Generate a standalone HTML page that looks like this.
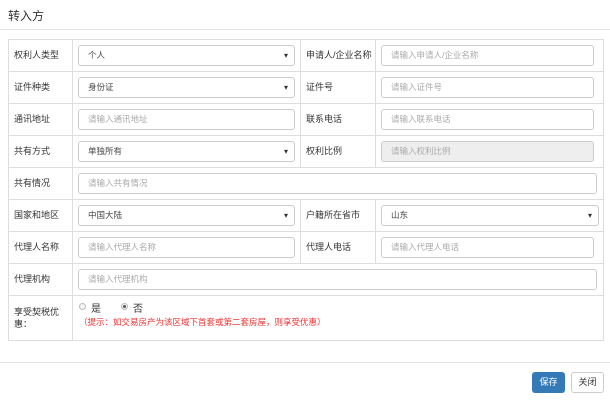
<!DOCTYPE html>
<html><head><meta charset="utf-8"><style>
*{box-sizing:border-box;margin:0;padding:0}
body{width:610px;height:402px;background:#fff;font-family:"Liberation Sans","Noto Sans CJK SC",sans-serif;font-size:9px;color:#333;position:relative;overflow:hidden}
.a{position:absolute}
.title{left:8px;top:7px;font-size:12px;color:#333}
.hl{left:0;width:610px;height:1px;background:#e5e5e5}
.lbl{font-size:9px;color:#333;line-height:32px}
.inp{border:1px solid #ccc;border-radius:3px;height:21px;line-height:19px;padding-left:9px;color:#aaa;font-size:8.5px;background:#fff}
.sel{color:#444}
.sel:after{content:"▾";position:absolute;right:6px;top:0;font-size:8px;color:#333}
.dis{background:#eee}
.v{width:1px;background:#ddd}
.h{height:1px;background:#ddd}
</style></head><body>
<div class="a title">转入方</div>
<div class="a hl" style="top:29px"></div>
<div class="a" style="left:8px;top:39px;width:596px;height:302px;border:1px solid #ddd"></div>
<div class="a h" style="left:8px;top:71px;width:596px"></div>
<div class="a h" style="left:8px;top:103px;width:596px"></div>
<div class="a h" style="left:8px;top:135px;width:596px"></div>
<div class="a h" style="left:8px;top:167px;width:596px"></div>
<div class="a h" style="left:8px;top:199px;width:596px"></div>
<div class="a h" style="left:8px;top:231px;width:596px"></div>
<div class="a h" style="left:8px;top:263px;width:596px"></div>
<div class="a h" style="left:8px;top:295px;width:596px"></div>
<div class="a v" style="left:72px;top:39px;height:302px"></div>
<div class="a v" style="left:300px;top:39px;height:128px"></div>
<div class="a v" style="left:375px;top:39px;height:128px"></div>
<div class="a v" style="left:300px;top:199px;height:64px"></div>
<div class="a v" style="left:375px;top:199px;height:64px"></div>

<div class="a lbl" style="left:14px;top:39px">权利人类型</div>
<div class="a inp sel" style="left:78px;top:45px;width:217px">个人</div>
<div class="a lbl" style="left:306px;top:39px">申请人/企业名称</div>
<div class="a inp" style="left:381px;top:45px;width:213px">请输入申请人/企业名称</div>

<div class="a lbl" style="left:14px;top:71px">证件种类</div>
<div class="a inp sel" style="left:78px;top:77px;width:217px">身份证</div>
<div class="a lbl" style="left:306px;top:71px">证件号</div>
<div class="a inp" style="left:381px;top:77px;width:213px">请输入证件号</div>

<div class="a lbl" style="left:14px;top:103px">通讯地址</div>
<div class="a inp" style="left:78px;top:109px;width:217px">请输入通讯地址</div>
<div class="a lbl" style="left:306px;top:103px">联系电话</div>
<div class="a inp" style="left:381px;top:109px;width:213px">请输入联系电话</div>

<div class="a lbl" style="left:14px;top:135px">共有方式</div>
<div class="a inp sel" style="left:78px;top:141px;width:217px">单独所有</div>
<div class="a lbl" style="left:306px;top:135px">权利比例</div>
<div class="a inp dis" style="left:381px;top:141px;width:213px">请输入权利比例</div>

<div class="a lbl" style="left:14px;top:167px">共有情况</div>
<div class="a inp" style="left:78px;top:173px;width:519px">请输入共有情况</div>

<div class="a lbl" style="left:14px;top:199px">国家和地区</div>
<div class="a inp sel" style="left:78px;top:205px;width:217px">中国大陆</div>
<div class="a lbl" style="left:306px;top:199px">户籍所在省市</div>
<div class="a inp sel" style="left:381px;top:205px;width:218px">山东</div>

<div class="a lbl" style="left:14px;top:231px">代理人名称</div>
<div class="a inp" style="left:78px;top:237px;width:217px">请输入代理人名称</div>
<div class="a lbl" style="left:306px;top:231px">代理人电话</div>
<div class="a inp" style="left:381px;top:237px;width:213px">请输入代理人电话</div>

<div class="a lbl" style="left:14px;top:263px">代理机构</div>
<div class="a inp" style="left:78px;top:269px;width:519px">请输入代理机构</div>

<div class="a" style="left:14px;top:306px;font-size:9px;line-height:12px;width:55px">享受契税优<br>惠：</div>
<div class="a" style="left:79px;top:303px;width:7px;height:7px;border:1px solid #bbb;border-radius:50%;background:#f4f4f4"></div>
<div class="a" style="left:91px;top:300px;font-size:10px">是</div>
<div class="a" style="left:121px;top:303px;width:7px;height:7px;border:1px solid #bbb;border-radius:50%;background:#f4f4f4"><div style="width:3px;height:3px;margin:1px;border-radius:50%;background:#555"></div></div>
<div class="a" style="left:133px;top:300px;font-size:10px">否</div>
<div class="a" style="left:79px;top:316px;font-size:8.5px;color:#e33">（提示：如交易房产为该区域下首套或第二套房屋，则享受优惠）</div>

<div class="a hl" style="top:362px"></div>
<div class="a" style="left:532px;top:372px;width:33px;height:21px;background:#337ab7;border-radius:3px;color:#fff;font-size:9px;text-align:center;line-height:21px">保存</div>
<div class="a" style="left:571px;top:372px;width:33px;height:21px;border:1px solid #ccc;border-radius:3px;color:#333;font-size:9px;text-align:center;line-height:19px">关闭</div>
</body></html>
